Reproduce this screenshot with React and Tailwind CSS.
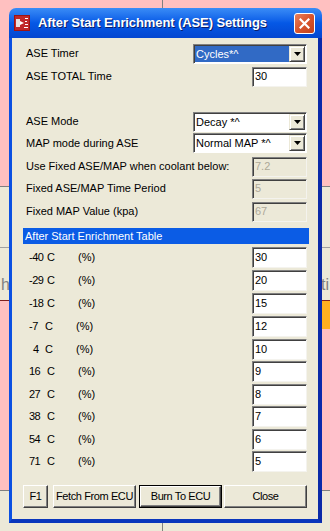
import { useState } from "react";

const FONT = "font-['Liberation_Sans',Arial,sans-serif]";

const tableRows = [
  { t: "-40", v: "30", n: "ml-[6px] w-[18px]", h: "h-[23px]" },
  { t: "-29", v: "20", n: "ml-[6px] w-[18px]", h: "h-[23px]" },
  { t: "-18", v: "15", n: "ml-[6px] w-[18px]", h: "h-[23px]" },
  { t: "-7", v: "12", n: "ml-[6px] w-[16px]", h: "h-[23px]" },
  { t: "4", v: "10", n: "ml-[10px] w-[12px]", h: "h-[22px]" },
  { t: "16", v: "9", n: "ml-[6px] w-[18px]", h: "h-[23px]" },
  { t: "27", v: "8", n: "ml-[6px] w-[18px]", h: "h-[22px]" },
  { t: "38", v: "7", n: "ml-[6px] w-[18px]", h: "h-[23px]" },
  { t: "54", v: "6", n: "ml-[6px] w-[18px]", h: "h-[22px]" },
  { t: "71", v: "5", n: "ml-[6px] w-[18px]", h: "h-[23px]" },
];

const Select = ({ value, focused }) => {
  return (
    <div className="ml-auto flex h-[20px] w-[114px] border border-t-[#808080] border-l-[#808080] border-r-white border-b-white bg-white p-[1px] shadow-[inset_1px_1px_0_#404040]">
      <div className={focused ? "flex-1 bg-[#316ac5] pl-[1px] leading-[16px] text-white" : "flex-1 pl-[1px] leading-[16px]"}>
        {value}
      </div>
      <div className="flex w-[16px] items-center justify-center border border-t-[#ece9d8] border-l-[#ece9d8] border-r-[#404040] border-b-[#404040] bg-[#ece9d8] shadow-[inset_1px_1px_0_white,inset_-1px_-1px_0_#808080]">
        <svg width="7" height="4" viewBox="0 0 7 4">
          <path d="M0 0h7L3.5 4z" fill="black" />
        </svg>
      </div>
    </div>
  );
};

const Box = ({ value, disabled, tall }) => {
  return (
    <div
      className={
        "ml-auto w-[55px] border border-t-[#808080] border-l-[#808080] border-r-[#f4f3ee] border-b-[#f4f3ee] pl-[2px] shadow-[inset_1px_1px_0_#404040] " +
        (tall ? "h-[21px] leading-[18px] " : "h-[20px] leading-[17px] ") +
        (disabled ? "bg-[#ece9d8] text-[#aca899]" : "bg-white text-black")
      }
    >
      {value}
    </div>
  );
};

const Btn = ({ label, w, def }) => {
  return (
    <div className={"flex h-[23px] items-center justify-center bg-[#ece9d8] " + w + (def ? " border border-black" : "")}>
      <div className="flex h-full w-full items-center justify-center whitespace-nowrap border border-t-white border-l-white border-r-[#404040] border-b-[#404040] tracking-[-0.4px] shadow-[inset_-1px_-1px_0_#808080]">
        {label}
      </div>
    </div>
  );
};

const AppIcon = () => (
  <svg width="16" height="16" viewBox="0 0 16 16">
    <rect x="0" y="0" width="16" height="16" fill="#9c1414" />
    <rect x="1" y="1" width="14" height="14" fill="#c0282a" />
    <path d="M2 4h4v8H2z" fill="#e8e0e0" />
    <path d="M6 6l4 2-4 2z" fill="white" />
    <rect x="11" y="3" width="3" height="1" fill="white" />
    <rect x="11" y="6" width="2" height="1" fill="white" />
    <rect x="11" y="9" width="3" height="1" fill="white" />
    <rect x="10" y="12" width="4" height="1" fill="white" />
  </svg>
);

const App = () => {
  const [timer] = useState("Cycles*^");

  return (
    <div className={"relative h-[531px] w-[330px] overflow-hidden bg-[#ffc0c0] text-[11px] text-black " + FONT}>
      {/* background window */}
      <div className="flex h-full flex-col">
        <div className="flex h-[187px] border-b border-[#808080]">
          <div className="w-[163px] border-r border-[#808080]"></div>
        </div>
        <div className="h-[61px] border-b border-[#a0a0a0] bg-[#ece9d8]"></div>
        <div className="flex h-[52px] items-end justify-between bg-[#ece9d8] pb-[6px] text-[16px] leading-[18px] text-[#808080]">
          <span className="ml-[1px]">hi</span>
          <span className="mr-[1px]">ti</span>
        </div>
        <div className="flex h-[190px] justify-between border-t border-[#802020]">
          <div></div>
          <div className="h-[28px] w-[10px] border-l border-[#802020] bg-[#ffb020]"></div>
        </div>
        <div className="flex flex-1 border-t border-[#808080] bg-[#ece9d8]">
          <div className="w-[163px] border-r border-[#808080]"></div>
        </div>
      </div>

      {/* dialog */}
      <div className="absolute left-[9px] top-[8px] flex h-[515px] w-[313px] flex-col">
        <div className="flex h-[30px] items-center rounded-t-[7px] bg-gradient-to-b from-[#3a8cf6] via-[#0558e6] to-[#0446d0] pl-[5px] pr-[7px]">
          <AppIcon />
          <span className="ml-[8px] text-[13px] font-bold tracking-[-0.1px] text-white [text-shadow:1px_1px_0_#0a1e6a]">
            After Start Enrichment (ASE) Settings
          </span>
          <div className="ml-auto flex h-[21px] w-[21px] items-center justify-center rounded-[3px] border border-white bg-gradient-to-br from-[#e8805c] via-[#d8542c] to-[#c0401c]">
            <svg width="11" height="11" viewBox="0 0 11 11">
              <path d="M1.5 1.5l8 8M9.5 1.5l-8 8" stroke="white" strokeWidth="2.2" strokeLinecap="square" />
            </svg>
          </div>
        </div>

        <div className="flex flex-1 flex-col border-l-[3px] border-r-[4px] border-b-[4px] border-l-[#0b50e2] border-r-[#0a2aa8] border-b-[#0a36bc] bg-[#ece9d8] px-[11px] pt-[4px]">
          <div className="flex h-[23px] items-center">
            <span className="pl-[3px]">ASE Timer</span>
            <Select value={timer} focused />
          </div>
          <div className="flex h-[23px] items-center">
            <span className="pl-[3px]">ASE TOTAL Time</span>
            <Box value="30" />
          </div>
          <div className="h-[23px]"></div>
          <div className="flex h-[21px] items-center">
            <span className="pl-[3px]">ASE Mode</span>
            <Select value="Decay *^" />
          </div>
          <div className="flex h-[22px] items-center">
            <span className="pl-[3px]">MAP mode during ASE</span>
            <Select value="Normal MAP *^" />
          </div>
          <div className="flex h-[23px] items-center pt-[2px]">
            <span className="pl-[3px]">Use Fixed ASE/MAP when coolant below:</span>
            <Box value="7.2" disabled />
          </div>
          <div className="flex h-[23px] items-center">
            <span className="pl-[3px]">Fixed ASE/MAP Time Period</span>
            <Box value="5" disabled />
          </div>
          <div className="flex h-[23px] items-center">
            <span className="pl-[3px]">Fixed MAP Value (kpa)</span>
            <Box value="67" disabled />
          </div>
          <div className="-mr-[2px] mt-[5px] flex h-[16px] items-center bg-[#0b5ce5] pl-[2px] text-white">
            After Start Enrichment Table
          </div>
          <div className="mt-[2px] flex flex-col">
            {tableRows.map((row, index) => {
              return (
                <div className={"flex items-center " + row.h} key={index}>
                  <span className={"tracking-[-0.5px] " + row.n}>{row.t}</span>
                  <span className="w-[31px]">C</span>
                  <span>(%)</span>
                  <Box value={row.v} tall />
                </div>
              );
            })}
          </div>
          <div className="mt-[12px] flex">
            <Btn label="F1" w="w-[27px]" />
            <div className="ml-[5px]"><Btn label="Fetch From ECU" w="w-[83px]" /></div>
            <div className="ml-[3px]"><Btn label="Burn To ECU" w="w-[83px]" def /></div>
            <div className="ml-[2px]"><Btn label="Close" w="w-[83px]" /></div>
          </div>
        </div>
      </div>
    </div>
  );
};

export default App;
